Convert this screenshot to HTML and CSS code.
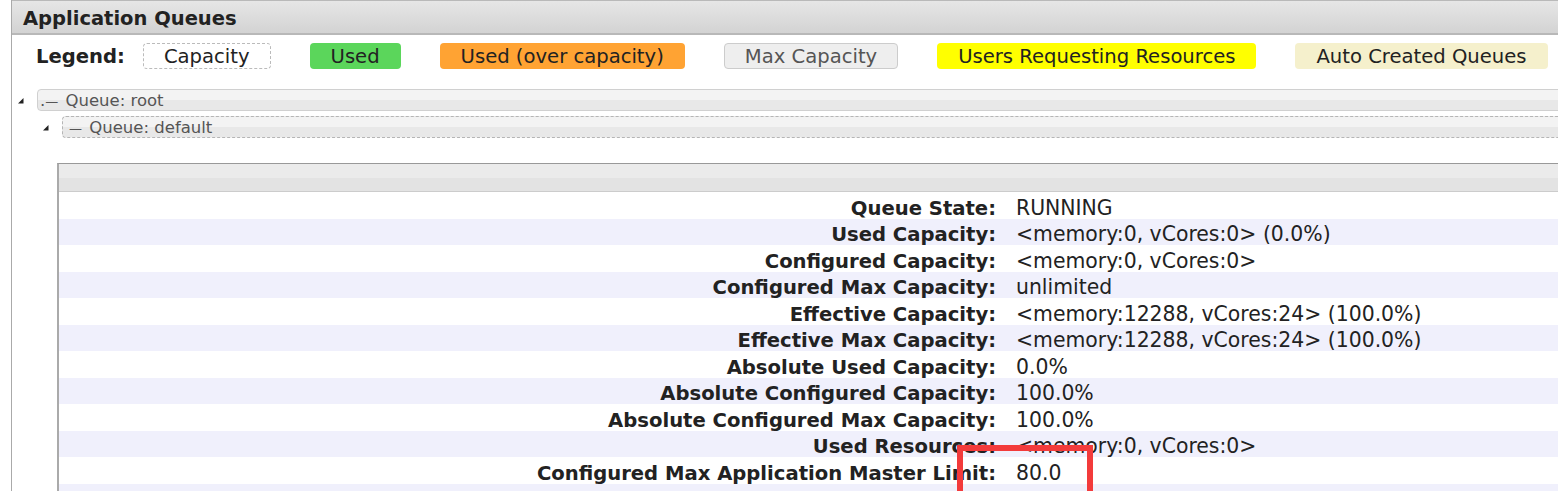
FILE: index.html
```html
<!DOCTYPE html>
<html lang="en">
<head>
  <meta charset="UTF-8" />
  <title>Application Queues</title>
  <link rel="stylesheet" href="styles.css">
</head>
<body>

  <div class="panel">
    <div class="panel-title">Application Queues</div>

    <div class="legend">
      <span class="legend-label">Legend:</span>
      <span class="lg lg-capacity">Capacity</span>
      <span class="lg lg-used">Used</span>
      <span class="lg lg-over">Used (over capacity)</span>
      <span class="lg lg-max">Max Capacity</span>
      <span class="lg lg-users">Users Requesting Resources</span>
      <span class="lg lg-auto">Auto Created Queues</span>
    </div>

    <ul class="tree">
      <li class="tree-root">
        <div class="node-row">
          <svg class="toggle" width="6" height="6" viewBox="0 0 6 6"><polygon points="5.5,0 5.5,5.5 0,5.5" fill="#222"/></svg>
          <span class="node node-root">.<span class="dash">&mdash;</span> Queue: root</span>
        </div>
        <ul>
          <li class="tree-leaf">
            <div class="node-row">
              <svg class="toggle" width="6" height="6" viewBox="0 0 6 6"><polygon points="5.5,0 5.5,5.5 0,5.5" fill="#222"/></svg>
              <span class="node node-leaf"><span class="dash">&mdash;</span> Queue: default</span>
            </div>

            <div class="queue-info">
              <div class="info-head"></div>
              <div class="info-row"><span class="k">Queue State:</span><span class="v">RUNNING</span></div>
              <div class="info-row"><span class="k">Used Capacity:</span><span class="v">&lt;memory:0, vCores:0&gt; (0.0%)</span></div>
              <div class="info-row"><span class="k">Configured Capacity:</span><span class="v">&lt;memory:0, vCores:0&gt;</span></div>
              <div class="info-row"><span class="k">Configured Max Capacity:</span><span class="v">unlimited</span></div>
              <div class="info-row"><span class="k">Effective Capacity:</span><span class="v">&lt;memory:12288, vCores:24&gt; (100.0%)</span></div>
              <div class="info-row"><span class="k">Effective Max Capacity:</span><span class="v">&lt;memory:12288, vCores:24&gt; (100.0%)</span></div>
              <div class="info-row"><span class="k">Absolute Used Capacity:</span><span class="v">0.0%</span></div>
              <div class="info-row"><span class="k">Absolute Configured Capacity:</span><span class="v">100.0%</span></div>
              <div class="info-row"><span class="k">Absolute Configured Max Capacity:</span><span class="v">100.0%</span></div>
              <div class="info-row"><span class="k">Used Resources:</span><span class="v">&lt;memory:0, vCores:0&gt;</span></div>
              <div class="info-row"><span class="k">Configured Max Application Master Limit:</span><span class="v">80.0</span></div>
              <div class="info-row"></div>
            </div>
          </li>
        </ul>
      </li>
    </ul>
  </div>

  <div class="mark"></div>

</body>
</html>
```

FILE: styles.css
```css
:root {
  --text: #222;
  --muted: #555;
  --line: #aaa;
  --stripe: #f0f0fc;
}

html {
  overflow: hidden;
}

body {
  margin: 0;
  font-family: "DejaVu Sans", Verdana, sans-serif;
  color: var(--text);
  background: #fff;
  position: relative;
  height: 491px;
  overflow: hidden;
}

.panel {
  margin-left: 11px;
  margin-right: -40px;
  border-left: 1px solid var(--line);
  min-height: 491px;
}

.panel-title {
  height: 32px;
  border-top: 1px solid #b9b9b9;
  border-bottom: 2px solid #b8b8b8;
  background: linear-gradient(#e6e6e6, #d3d3d3);
  padding-left: 11px;
  font-size: 19.5px;
  font-weight: bold;
  line-height: 35px;
}

.legend {
  display: flex;
  align-items: center;
  gap: 39px;
  margin-top: 8px;
  padding-left: 24px;
  height: 26px;
  font-size: 19.6px;
}

.legend-label {
  font-weight: bold;
  margin-right: -21px;
}

.lg {
  height: 24px;
  line-height: 25px;
  padding: 0 20px;
  border: 1px solid transparent;
  border-radius: 4px;
}

.lg-capacity { border: 1px dashed #bbb; }
.lg-used { background: #5bd65b; }
.lg-over { background: #ffa333; }
.lg-max { background: #eee; border-color: #ccc; color: var(--muted); }
.lg-users { background: #ffff00; }
.lg-auto { background: #f5f0cc; }

.tree,
.tree ul {
  list-style: none;
  margin: 0;
  padding: 0;
}

.tree {
  margin-top: 20px;
  padding-left: 6px;
}

.tree ul {
  margin-top: 5px;
  padding-left: 25px;
}

.node-row {
  display: flex;
  align-items: center;
  gap: 13px;
  height: 22px;
}

.toggle {
  flex: none;
  margin-top: 2px;
}

.node {
  flex: 1;
  height: 20px;
  line-height: 21px;
  padding-left: 2px;
  font-size: 16.5px;
  color: var(--muted);
  border-radius: 4px;
  background: linear-gradient(#f3f3f3 50%, #e8e8e8 50%);
  white-space: nowrap;
}

.node-root { border: 1px solid #d0d0d0; }
.node-leaf { border: 1px dashed #b5b5b5; padding-left: 6px; }

.dash {
  font-size: 13px;
  color: #555;
  margin-right: 2px;
}

.queue-info {
  margin-top: 25px;
  margin-left: 14px;
  border-left: 2px solid var(--line);
  border-top: 1px solid #999;
  font-size: 20px;
}

.info-head {
  height: 27px;
  border-bottom: 1px solid #ccc;
  background: linear-gradient(#ebebeb 50%, #e3e3e3 50%);
}

.info-row {
  display: grid;
  grid-template-columns: 937px 1fr;
  column-gap: 20px;
  height: 26.5px;
  padding-top: 5.5px;
  line-height: 21px;
  box-sizing: border-box;
  white-space: nowrap;
}

.info-row:nth-child(odd) {
  background: var(--stripe);
}

.info-row .k {
  text-align: right;
  font-weight: bold;
  font-size: 19.6px;
}

.info-row .v {
  font-size: 20.4px;
}

.mark {
  position: absolute;
  left: 957px;
  top: 445px;
  width: 124px;
  height: 40px;
  border: 6px solid #f33b3b;
}
```
